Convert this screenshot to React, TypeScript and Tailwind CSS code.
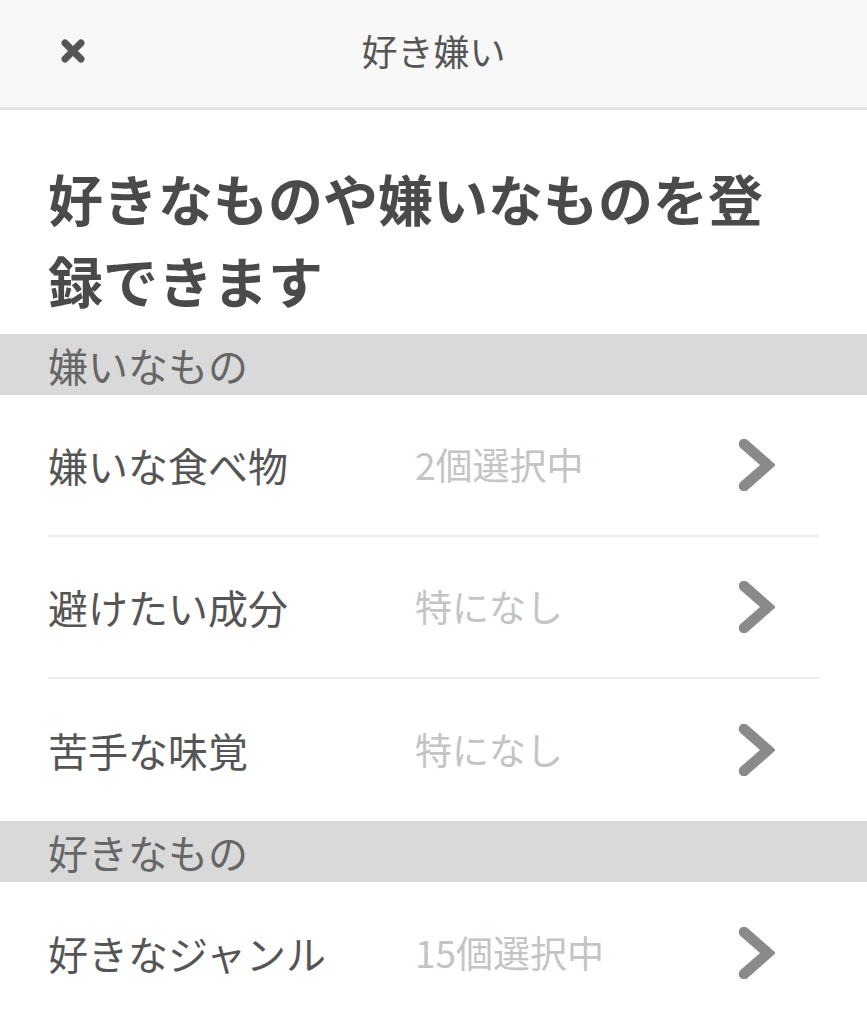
import React from "react";

const font = { fontFamily: '"Noto Sans CJK JP", "Noto Sans", sans-serif' };

const Chevron = () => (
  <svg width="38" height="52" viewBox="0 0 38 52" className="shrink-0">
    <polyline
      points="7,5 31,26 7,47"
      fill="none"
      stroke="#8a8a8a"
      strokeWidth="10.5"
      strokeLinejoin="miter"
      strokeLinecap="round"
    />
  </svg>
);

const CloseIcon = () => (
  <svg width="26" height="26" viewBox="0 0 26 26">
    <path
      d="M5 5 L21 21 M21 5 L5 21"
      stroke="#555"
      strokeWidth="7"
      strokeLinecap="round"
    />
  </svg>
);

interface RowProps {
  label: string;
  value: string;
  divider?: boolean;
}

const Row = ({ label, value, divider }: RowProps) => (
  <div className="px-[48px]">
    <div
      className={`h-[142px] flex items-center ${
        divider ? "border-b-2 border-[#ececec]" : ""
      }`}
    >
      <span className="w-[367px] text-[40px] text-[#555] whitespace-nowrap">
        {label}
      </span>
      <span className="flex-1 text-[37px] text-[#c4c4c4] whitespace-nowrap">
        {value}
      </span>
      <span className="mr-[44px] flex items-center">
        <Chevron />
      </span>
    </div>
  </div>
);

const SectionHeader = ({ title }: { title: string }) => (
  <div className="h-[61px] bg-[#d9d9d9] flex items-center px-[48px]">
    <span className="text-[40px] leading-none text-[#666]">{title}</span>
  </div>
);

export default function App() {
  return (
    <div className="w-[867px] h-[1024px] bg-white overflow-hidden" style={font}>
      <header className="h-[110px] bg-[#f8f8f8] border-b-[3px] border-[#e5e5e5] flex items-center relative">
        <button className="absolute left-[60px] top-[38px]">
          <CloseIcon />
        </button>
        <h1 className="w-full text-center text-[36px] text-[#555] leading-none -mt-[8px]">
          好き嫌い
        </h1>
      </header>

      <section className="pt-[46px] pb-[14px] px-[48px]">
        <h2 className="text-[55px] font-bold leading-[82px] text-[#4a4a4a]">
          好きなものや嫌いなものを登
          <br />
          録できます
        </h2>
      </section>

      <SectionHeader title="嫌いなもの" />
      <Row label="嫌いな食べ物" value="2個選択中" divider />
      <Row label="避けたい成分" value="特になし" divider />
      <Row label="苦手な味覚" value="特になし" />

      <SectionHeader title="好きなもの" />
      <Row label="好きなジャンル" value="15個選択中" />
    </div>
  );
}
